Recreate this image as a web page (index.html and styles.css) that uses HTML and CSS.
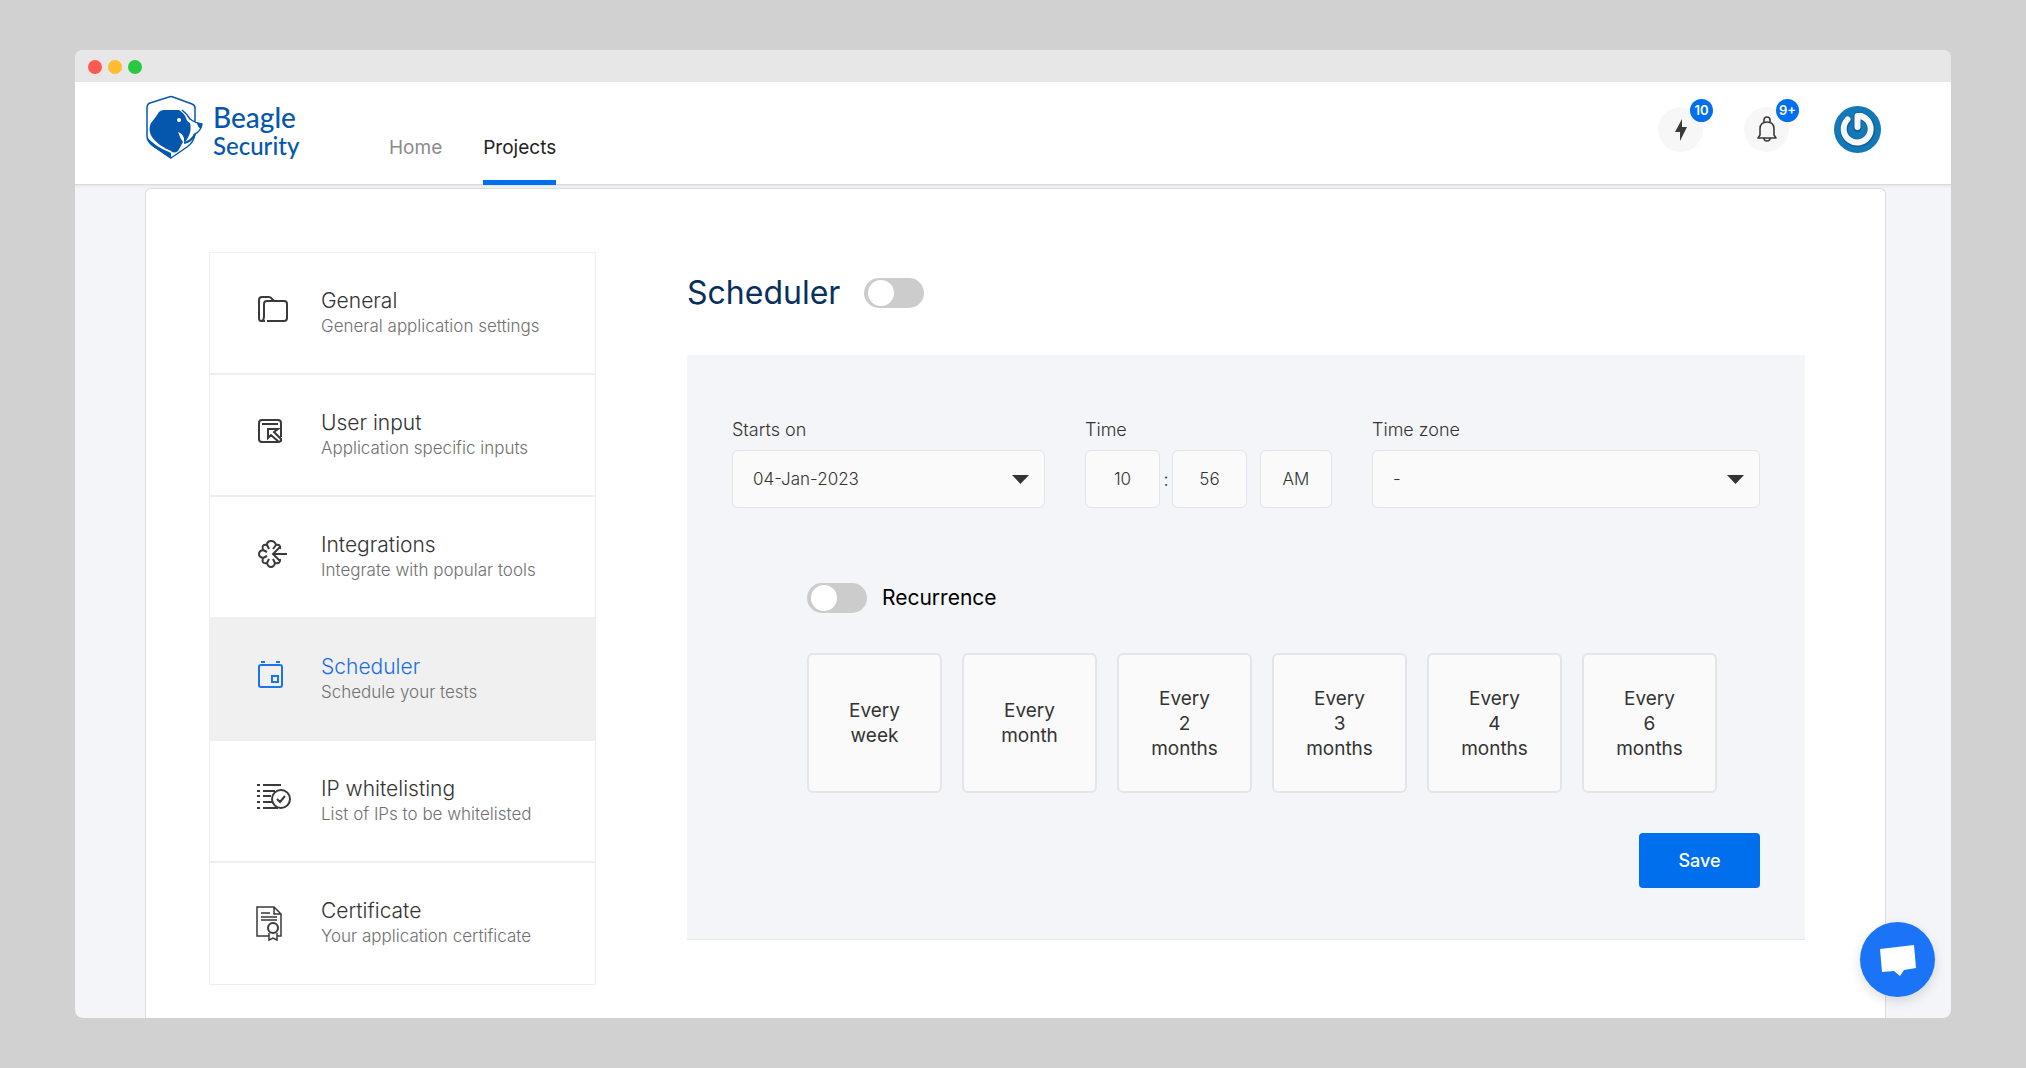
FILE: index.html
```html
<!DOCTYPE html>
<html lang="en">
<head>
<meta charset="utf-8">
<title>Beagle Security - Scheduler</title>
<link rel="stylesheet" href="styles.css">
</head>
<body>
<div class="window">
  <div class="titlebar"><span class="dot dot-red"></span><span class="dot dot-yellow"></span><span class="dot dot-green"></span></div>
  <header class="header">
    <a class="logo" href="#">
      <svg class="logo-mark" viewBox="0 0 58 66" aria-hidden="true">
        <path d="M50 27V13Q50 10 47 9L28 2Q26 1 24 2L5 8Q2 9 2 13V41Q2 46 7 50L26 63L42 52Q49 47 50 39Q56 36 57 29Q50 28 45 24Q42 19 37 15" fill="none" stroke="#0557ad" stroke-width="1.500" stroke-linejoin="round"/>
        <path d="M19 15H34Q39 18 41 23Q42 27 45 28C47 36 44 41 41 46L39 47V43Q37 38 33 37Q35 43 38 47Q36 51 33 56Q29 59 26 56C19 53 11 48 7 42C4 37 4 32 6 28Q11 22 14 17Q16 15 19 15Z" fill="#0557ad"/>
        <path d="M39 48Q47 46 50 39" fill="none" stroke="#0557ad" stroke-width="2"/>
        <path d="M2 42Q9 51 26 58V64L7 51Q2 46 2 42Z" fill="#0557ad"/>
        <path d="M52 27L57 29L56 34Q52 32 52 27Z" fill="#0557ad"/>
        <circle cx="34" cy="25" r="2" fill="#fff"/>
      </svg>
      <span class="logo-text"><span class="logo-top">Beagle</span><span class="logo-bottom">Security</span></span>
    </a>
    <nav class="nav"><a href="#">Home</a><a class="current" href="#">Projects</a></nav>
    <div class="actions">
      <button class="round" aria-label="Activity">
        <svg width="14" height="24" viewBox="0 0 14 24"><path d="M8 1L1 14H6L6 23L13 9H8Z" fill="#3a3a3a"/></svg>
        <span class="badge">10</span>
      </button>
      <button class="round" aria-label="Notifications">
        <svg width="22" height="28" viewBox="0 0 22 28" fill="none" stroke="#3a3a3a" stroke-width="1.600"><path d="M2 22H20L18 19V13C18 8 15 6 11 6S4 8 4 13V19Z" stroke-linejoin="round"/><path d="M8 6V4A3 3 0 0 1 14 4V6M8 22A3 3 0 0 0 14 22"/></svg>
        <span class="badge">9+</span>
      </button>
      <a class="avatar" href="#" aria-label="Account"><svg width="47" height="47" viewBox="0 0 47 47"><circle cx="23.500" cy="23.500" r="23.500" fill="#1278b7"/><path d="M13.500 14.500A13.500 13.500 0 1 0 27 10.500H23.500V22" fill="none" stroke="#0a609a" stroke-width="8" stroke-linecap="round" stroke-linejoin="round"/><path d="M13.500 13.500A13.500 13.500 0 1 0 27 10H23.500V21" fill="none" stroke="#f7f7f7" stroke-width="6" stroke-linecap="round" stroke-linejoin="round"/></svg></a>
    </div>
  </header>
  <main class="page">
    <section class="card">
      <nav class="side" aria-label="Settings">
        <a href="#"><svg viewBox="0 0 36 36"><path d="M9 26H5Q3 26 3 23V5Q3 2 6 2H13Q15 2 16 4L18 6H28Q31 6 31 9V23Q31 26 28 26H11M6 26Q8 25 8 21V9Q8 6 11 6H18"/></svg><span class="item"><span class="name">General</span><span class="desc">General application settings</span></span></a>
        <a href="#"><svg viewBox="0 0 36 36"><path d="M22 25H6Q3 25 3 22V6Q3 3 6 3H22Q25 3 25 6V20M6 7H22M12 12H22L18 15L25 22V24L23 25L15 18L12 21Z"/></svg><span class="item"><span class="name">User input</span><span class="desc">Application specific inputs</span></span></a>
        <a href="#"><svg viewBox="0 0 36 36"><path d="M24 10Q25 5 20 6Q19 2 15 2T11 6Q5 5 7 11Q3 12 3 15T7 19Q5 25 11 24Q12 28 15 28T19 24Q25 25 24 20M11 6L13 10M7 11L11 13M7 19L11 17M11 24L13 20M19 24L17 20M20 6L17 10M31 15H17M24 8L17 15L24 22"/></svg><span class="item"><span class="name">Integrations</span><span class="desc">Integrate with popular tools</span></span></a>
        <a class="selected" href="#"><svg viewBox="0 0 36 36"><path d="M5 4H24Q26 4 26 6V24Q26 26 24 26H5Q3 26 3 24V6Q3 4 5 4ZM5 1H9M20 1H24M16 15H22V21H16Z"/></svg><span class="item"><span class="name">Scheduler</span><span class="desc">Schedule your tests</span></span></a>
        <a href="#"><svg viewBox="0 0 36 36"><path d="M1 2H4M7 2H25M1 8H4M7 8H19M1 13H4M7 13H15M1 19H4M7 19H16M1 25H4M7 25H22M21 16L24 19L29 13"/><circle cx="25" cy="16" r="9"/></svg><span class="item"><span class="name">IP whitelisting</span><span class="desc">List of IPs to be whitelisted</span></span></a>
        <a href="#"><svg viewBox="0 0 36 36"><path d="M13 30H1V1H18L25 8V30H21M18 1V8H25M5 7H14M5 11H21M5 14H21M13 27V34L17 32L21 34V27" stroke-width="1.500"/><circle cx="17" cy="22" r="5"/></svg><span class="item"><span class="name">Certificate</span><span class="desc">Your application certificate</span></span></a>
      </nav>
      <form class="content">
        <div class="heading"><h1 id="sched">Scheduler</h1><input class="switch" type="checkbox" aria-labelledby="sched"></div>
        <div class="panel">
          <div class="fields">
            <div class="field date"><label for="date">Starts on</label><select id="date"><option>04-Jan-2023</option></select></div>
            <div class="field"><label for="hour">Time</label><div class="time"><input id="hour" value="10"><span>:</span><input value="56" aria-label="Minutes"><button class="ampm" type="button">AM</button></div></div>
            <div class="field zone"><label for="zone">Time zone</label><select id="zone"><option>-</option></select></div>
          </div>
          <div class="recur"><input class="switch" type="checkbox" id="recur"><label for="recur">Recurrence</label></div>
          <div class="options">
            <button type="button">Every<br>week</button><button type="button">Every<br>month</button><button type="button">Every<br>2<br>months</button><button type="button">Every<br>3<br>months</button><button type="button">Every<br>4<br>months</button><button type="button">Every<br>6<br>months</button>
          </div>
          <div class="submit"><button type="button" class="save">Save</button></div>
        </div>
      </form>
    </section>
    <button class="chat" aria-label="Open chat"><svg width="38" height="32" viewBox="0 0 38 32"><path d="M1 5L35 1L37 24L25 26L21 32L15 27L3 28Z" fill="#fff"/></svg></button>
  </main>
</div>
</body>
</html>
```
FILE: styles.css
```css
* { box-sizing: border-box; }
body { margin: 0; min-height: 100vh; display: flex; padding: 50px 75px; background: #d1d1d1; color: #333; font-family: Inter, "Noto Sans", sans-serif; font-size: 18px; }
button, input, select { font: inherit; color: inherit; }
button { cursor: pointer; }
a { color: inherit; text-decoration: none; }
.window { flex: 1; display: flex; flex-direction: column; border-radius: 8px; overflow: hidden; background: #f3f5f8; position: relative; }
.titlebar { height: 32px; display: flex; align-items: center; gap: 6px; padding: 2px 13px 0; background: #e7e7e7; }
.dot { width: 14px; height: 14px; border-radius: 50%; }
.dot-red { background: #ff5a52; }
.dot-yellow { background: #ffbc2e; }
.dot-green { background: #28c840; }
.header { height: 103px; display: flex; background: #fff; border-bottom: 1px solid #d7d9dc; padding: 0 70px; box-shadow: 0 1px 3px #e0e2e6; z-index: 1; }
.logo { display: flex; align-items: flex-start; width: 158px; gap: 10px; padding-top: 13px; color: #0557ad; }
.logo-mark { width: 58px; height: 66px; flex: none; }
.logo-text { display: flex; flex-direction: column; padding-top: 7px; font-family: Lato, sans-serif; }
.logo-top { font-size: 28px; line-height: 30px; font-weight: 500; }
.logo-bottom { font-size: 24px; line-height: 28px; font-weight: 500; }
.nav { display: flex; margin-left: 86px; gap: 41px; }
.nav a { padding-top: 54px; font-size: 19px; line-height: 24px; color: #8b8b8b; }
.nav .current { color: #222; border-bottom: 5px solid #006fee; margin-bottom: -1px; }
.actions { margin-left: auto; display: flex; align-items: flex-start; gap: 41px; padding-top: 24px; }
.round { width: 45px; height: 45px; margin-top: 1px; padding: 0; border: 0; border-radius: 50%; background: #f7f7f7; display: flex; align-items: center; justify-content: center; position: relative; }
.badge { position: absolute; right: -10px; top: -8px; width: 23px; height: 23px; border-radius: 50%; background: #006fee; color: #fff; font-size: 13px; line-height: 23px; font-weight: 600; }
.avatar { height: 47px; margin-left: 4px; }
.page { flex: 1; display: flex; padding: 3px 65px 0 70px; }
.card { flex: 1; display: flex; gap: 91px; padding: 63px 80px 33px 63px; background: #fff; border: 1px solid #d9dce0; border-bottom: 0; border-radius: 6px 6px 0 0; }
.side { width: 387px; flex: none; border: 1px solid #efefef; align-self: flex-start; }
.side a { height: 122px; display: flex; align-items: center; gap: 29px; padding: 0 0 0 46px; border-bottom: 2px solid #efefef; }
.side a:last-child { border-bottom: 0; height: 121px; }
.side svg { width: 36px; height: 36px; flex: none; fill: none; stroke: #3a3a3a; stroke-width: 2; }
.item { display: flex; flex-direction: column; font-weight: 300; }
.name { font-size: 21px; line-height: 26px; color: #333; }
.desc { font-size: 17px; line-height: 25px; color: #707070; }
.side .selected { background: #f0f0f0; }
.selected .name { color: #1c6ee0; }
.side .selected svg { stroke: #1c75e8; }
.content { flex: 1; }
.heading { display: flex; align-items: center; gap: 24px; height: 42px; margin: 20px 0 41px; }
h1 { margin: 0; font-size: 32px; line-height: 40px; font-weight: 400; color: #072f60; }
.switch { appearance: none; width: 60px; height: 30px; margin: 0; padding: 2px 4px; border-radius: 15px; background: #ccc; display: flex; }
.switch::before { content: ""; width: 26px; height: 26px; border-radius: 50%; background: #fff; }
.panel { padding: 62px 45px 51px; background: #f3f5f8; border-bottom: 1px solid #e5e7ea; }
.fields { display: flex; gap: 40px; }
.field label { display: block; line-height: 26px; margin-bottom: 7px; font-weight: 300; }
.date { width: 313px; }
.zone { flex: 1; }
.field select, .time input, .ampm { height: 58px; border: 1px solid #e1e4e8; border-radius: 6px; background: #fafafa; font-size: 17px; font-weight: 300; }
.field select { appearance: none; width: 100%; padding: 0 20px; background: #fafafa url("data:image/svg+xml,%3Csvg xmlns='http://www.w3.org/2000/svg' width='17' height='9'%3E%3Cpath d='M0 0H17L8.5 9Z' fill='%23333'/%3E%3C/svg%3E") no-repeat right 15px center; }
.time { display: flex; align-items: center; }
.time span { width: 12px; text-align: center; font-weight: 300; }
.time input { width: 75px; text-align: center; padding: 0; }
.ampm { width: 72px; padding: 0; margin-left: 13px; }
.recur { display: flex; align-items: center; gap: 15px; margin: 75px 0 40px 75px; }
.recur label { font-size: 21px; line-height: 30px; color: #000; }
.options { display: grid; grid-template-columns: repeat(6, 1fr); gap: 20px; margin: 0 43px 40px 75px; }
.options button { height: 140px; padding: 0; background: #fafafa; border: 2px solid #e3e5e9; border-radius: 6px; font-size: 19px; line-height: 25px; }
.submit { display: flex; justify-content: flex-end; }
.save { width: 121px; height: 55px; border: 0; border-radius: 4px; background: #006fee; color: #fff; font-weight: 500; }
.chat { position: absolute; right: 16px; bottom: 21px; width: 75px; height: 75px; padding: 0; border: 0; border-radius: 50%; background: #1b74f8; display: flex; align-items: center; justify-content: center; box-shadow: 0 4px 12px #0002; }
```
